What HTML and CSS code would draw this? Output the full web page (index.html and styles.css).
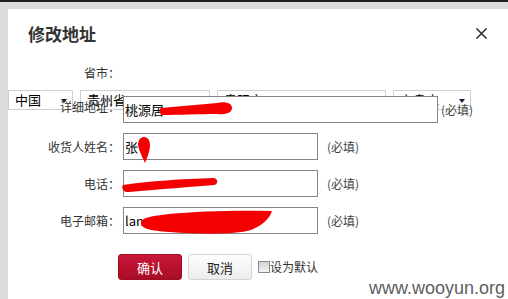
FILE: index.html
```html
<!DOCTYPE html>
<html lang="zh-CN">
  <head>
    <meta charset="UTF-8" />
    <meta name="viewport" content="width=device-width, initial-scale=1.0" />
    <title>修改地址</title>
    <link rel="stylesheet" href="styles.css">
  </head>
  <body>
    <div class="topbar"></div>
    <div class="backdrop">
      <div class="dialog">
        <div class="dialog-head">
          <h2 class="dialog-title">修改地址</h2>
          <a class="dialog-close" href="#">
            <svg width="13" height="11" viewBox="0 0 13 11">
              <path d="M1.5 0.5 L11.5 10.5 M11.5 0.5 L1.5 10.5" stroke="#333" stroke-width="1.6" fill="none" />
            </svg>
          </a>
        </div>

        <form class="address-form">
          <div class="form-row row-region">
            <label class="form-label">省市：</label>
          </div>
          <div class="region-selects">
            <div class="dropdown dd-country"><span>中国</span><span class="caret"></span></div>
            <div class="dropdown dd-province"><span>贵州省</span><span class="caret"></span></div>
            <div class="dropdown dd-city"><span>贵阳市</span><span class="caret"></span></div>
            <div class="dropdown dd-district"><span>六盘水</span><span class="caret"></span></div>
          </div>

          <div class="form-row row-address">
            <label class="form-label">详细地址：</label>
            <div class="field field-wide">
              <input class="text-input" type="text" value="桃源居" />
              <svg class="scribble scribble-address" width="74" height="18" viewBox="0 0 74 18">
                <path d="M2,9 C20,7 40,6 58,4 C66,2 73,4 73,9 C73,14 66,16 58,15 C40,15 20,16 4,16 C0,16 0,10 2,9 Z" />
              </svg>
            </div>
            <span class="required">(必填)</span>
          </div>

          <div class="form-row">
            <label class="form-label">收货人姓名：</label>
            <div class="field">
              <input class="text-input" type="text" value="张" />
              <svg class="scribble scribble-name" width="14" height="28" viewBox="0 0 14 28">
                <path d="M7,1 C11,1 13,5 13,9 C13,15 10,22 8,27 C6,22 2,15 1,9 C1,5 3,1 7,1 Z" />
              </svg>
            </div>
            <span class="required">(必填)</span>
          </div>

          <div class="form-row">
            <label class="form-label">电话：</label>
            <div class="field">
              <input class="text-input" type="text" value="" />
              <svg class="scribble scribble-phone" width="98" height="16" viewBox="0 0 98 16">
                <path d="M2,8 C30,4 60,2 92,1 C97,1 98,7 93,8 C70,10 40,12 8,15 C2,16 0,10 2,8 Z" />
              </svg>
            </div>
            <span class="required">(必填)</span>
          </div>

          <div class="form-row">
            <label class="form-label">电子邮箱：</label>
            <div class="field">
              <input class="text-input" type="text" value="lan" />
              <svg class="scribble scribble-email" width="134" height="27" viewBox="0 0 134 27">
                <path d="M2,14 C4,9 14,8 30,6 C60,3 100,2 133,3 C131,10 124,17 112,22 C95,27 60,26 30,24 C12,23 0,20 2,14 Z" />
              </svg>
            </div>
            <span class="required">(必填)</span>
          </div>

          <div class="form-actions">
            <button type="button" class="btn btn-primary">确认</button>
            <button type="button" class="btn btn-default">取消</button>
            <label class="check"><input type="checkbox" class="check-box" />设为默认</label>
          </div>
        </form>
      </div>
    </div>
    <div class="watermark">www.wooyun.org</div>
  </body>
</html>
```

FILE: styles.css
```css
body {
  margin: 0;
  padding: 0;
  height: 299px;
  overflow: hidden;
  background-color: #dcdcdc;
  font-family: "Noto Sans CJK SC", sans-serif;
  font-size: 12px;
  color: #333;
  position: relative;
}
.topbar {
  height: 2px;
  background-color: #1e1e1e;
}
.backdrop {
  display: flex;
  padding: 7px 0 0 8px;
}
.dialog {
  flex: 1;
  height: 300px;
  background-color: #fff;
}
.dialog-head {
  display: flex;
  justify-content: space-between;
  align-items: center;
  padding: 14px 20px 0 20px;
}
.dialog-title {
  margin: 0;
  font-size: 17px;
  line-height: 22px;
  font-weight: bold;
  color: #333;
}
.dialog-close {
  display: flex;
  margin-top: -2px;
}

.address-form {
  margin-top: 20px;
}
.form-row {
  display: flex;
  align-items: center;
  margin-top: 10px;
}
.form-label {
  width: 112px;
  margin-right: 3px;
  text-align: right;
  line-height: 16px;
  color: #333;
}
.row-region {
  margin-top: 0;
}

.region-selects {
  display: flex;
  gap: 7px;
  margin-top: 9px;
}
.dropdown {
  display: flex;
  justify-content: space-between;
  align-items: center;
  box-sizing: border-box;
  height: 20px;
  padding: 0 5px 0 6px;
  border: 1px solid #cfcfcf;
  background-color: #fff;
  font-size: 13px;
  line-height: 18px;
  color: #000;
}
.dd-country {
  width: 65px;
}
.dd-province {
  width: 130px;
}
.dd-city {
  width: 169px;
}
.dd-district {
  width: 78px;
}
.caret {
  width: 0;
  height: 0;
  margin-top: 1px;
  border-left: 3.5px solid transparent;
  border-right: 3.5px solid transparent;
  border-top: 4px solid #1a1a3a;
}

.row-address {
  margin-top: -14px;
  align-items: flex-start;
}
.row-address .form-label {
  padding-top: 3px;
}
.row-address .required {
  align-self: flex-end;
  margin-left: 3px;
  padding-bottom: 5px;
}

.field {
  position: relative;
  width: 195px;
  height: 27px;
}
.field-wide {
  width: 315px;
}
.text-input {
  box-sizing: border-box;
  width: 100%;
  height: 27px;
  margin: 0;
  padding: 0 1px;
  border: 1px solid #858585;
  background-color: #fff;
  font-family: "Noto Sans CJK SC", sans-serif;
  font-size: 13px;
  color: #000;
  outline: none;
}
.required {
  margin-left: 9px;
  line-height: 16px;
  color: #444;
}

.scribble {
  position: absolute;
  fill: #f50000;
}
.scribble-address {
  left: 36px;
  top: 3px;
}
.scribble-name {
  left: 14px;
  top: 3px;
}
.scribble-phone {
  left: -2px;
  top: 7px;
}
.scribble-email {
  left: 16px;
  top: 1px;
}

.form-actions {
  display: flex;
  align-items: center;
  gap: 6px;
  margin-top: 20px;
  padding-left: 110px;
}
.btn {
  width: 64px;
  height: 26px;
  border-radius: 3px;
  font-family: "Noto Sans CJK SC", sans-serif;
  font-size: 13px;
  padding: 0;
}
.btn-primary {
  border: 1px solid #a00a22;
  background: linear-gradient(#c8183a, #a90d25);
  color: #fff;
}
.btn-default {
  border: 1px solid #d4d4d4;
  background: linear-gradient(#fefefe, #ececec);
  color: #222;
}
.check {
  display: flex;
  align-items: center;
  color: #333;
  line-height: 16px;
}
.check-box {
  appearance: none;
  width: 12px;
  height: 12px;
  margin: 0;
  border: 1px solid #8a8a8a;
  background: linear-gradient(#d4d4d4, #f4f4f4);
}

.watermark {
  position: absolute;
  right: 3px;
  bottom: 0;
  font-family: "Liberation Sans", Arial, sans-serif;
  font-size: 18px;
  line-height: 22px;
  color: #5e5e5e;
}
```
